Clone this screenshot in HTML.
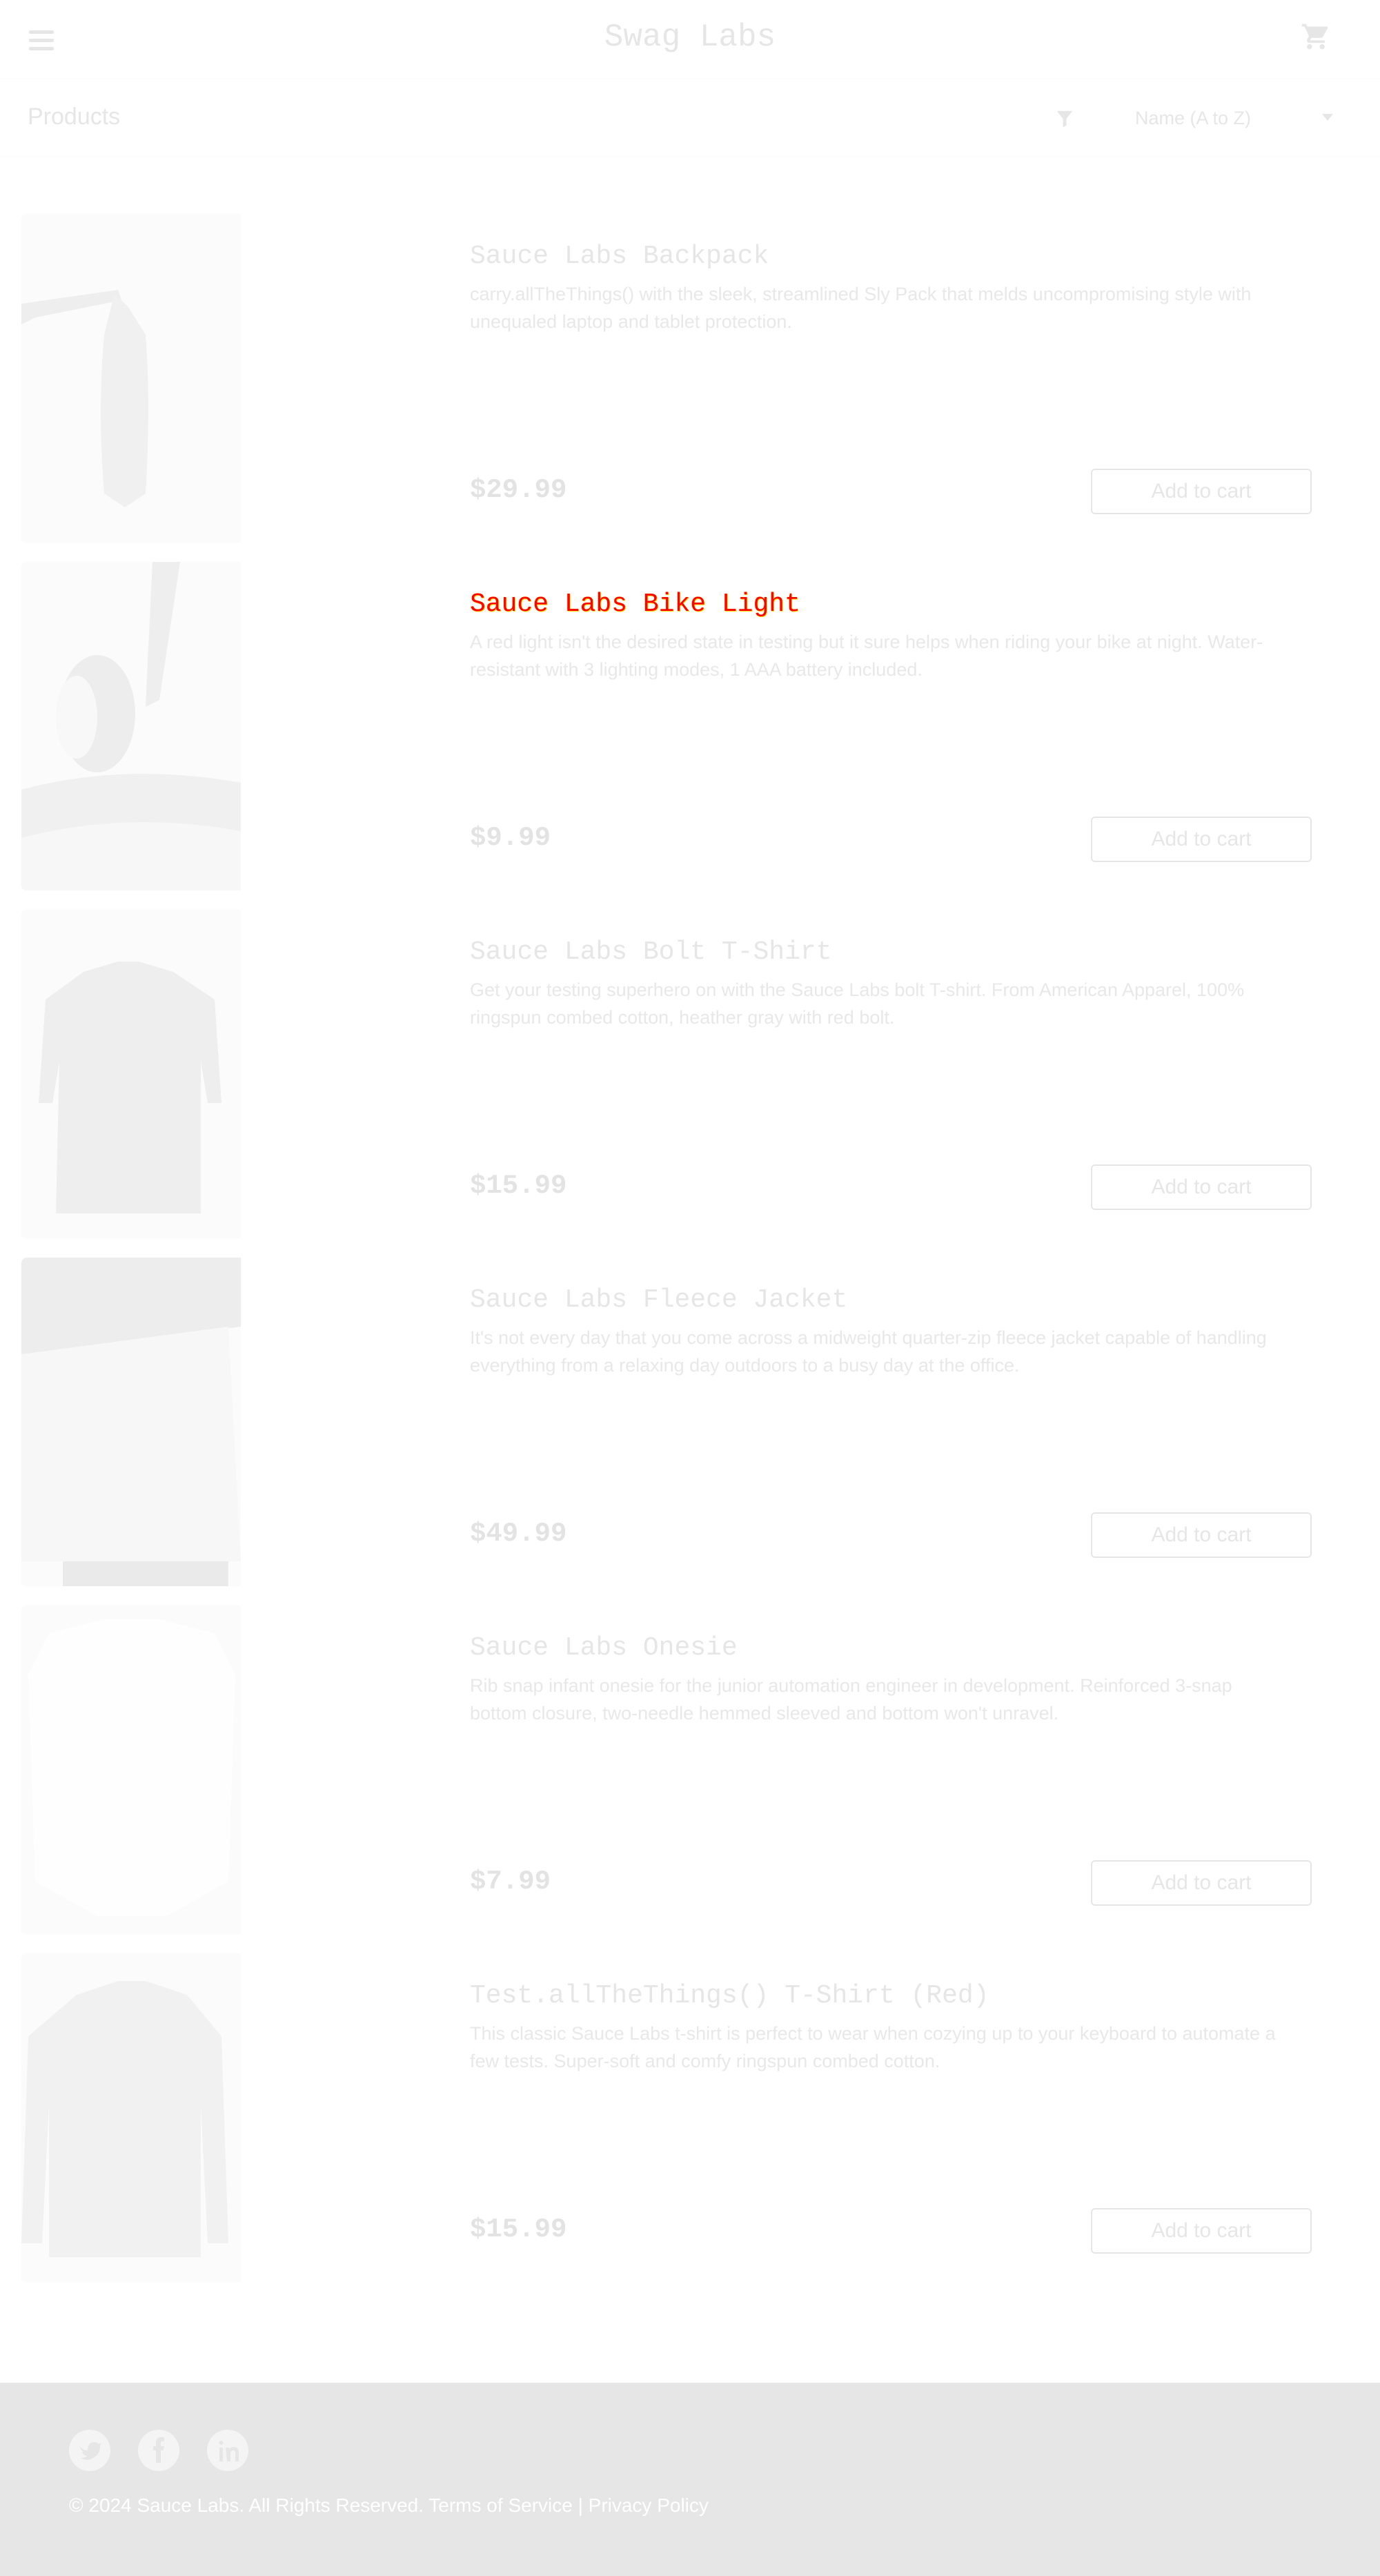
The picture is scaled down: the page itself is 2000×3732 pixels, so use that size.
<!DOCTYPE html>
<html><head><meta charset="utf-8"><style>
*{margin:0;padding:0;box-sizing:border-box}
body{width:2000px;height:3732px;background:#fff;font-family:"Liberation Sans",sans-serif;position:relative;overflow:hidden;color:#e3e3e3}
.abs{position:absolute}
.hline{position:absolute;left:0;width:2000px;height:2px;background:#fcfcfc}
.title{font-family:"Liberation Mono",monospace;font-size:42px;color:#e6e6e6;white-space:nowrap}
.card{position:absolute;left:31px;width:1937px;height:476px;border-radius:8px;background:#fff;box-shadow:0 0 2px #fafafa}
.img{position:absolute;left:0;top:0;width:318px;height:476px;background:#fbfbfb;border-radius:8px 0 0 8px;overflow:hidden}
.name{position:absolute;left:650px;top:40px;font-family:"Liberation Mono",monospace;font-size:38px;color:#e6e6e6;white-space:nowrap}
.desc{position:absolute;left:650px;top:96px;width:1190px;font-size:27px;line-height:40px;color:#e8e8e8}
.price{position:absolute;left:650px;top:378px;font-family:"Liberation Mono",monospace;font-size:39px;font-weight:bold;color:#e3e3e3}
.btn{position:absolute;left:1550px;top:369px;width:320px;height:66px;border:2px solid #e6e6e6;border-radius:6px;font-size:30px;color:#e6e6e6;text-align:center;line-height:62px}
.red{color:#ff0000;text-shadow:0 0 1px #ffe000,1px 1px 0 #ffdd00}
</style></head><body>
<div class="abs" style="left:42px;top:44px;width:36px;height:5px;background:#e6e6e6;border-radius:2px"></div>
<div class="abs" style="left:42px;top:56px;width:36px;height:5px;background:#e6e6e6;border-radius:2px"></div>
<div class="abs" style="left:42px;top:68px;width:36px;height:5px;background:#e6e6e6;border-radius:2px"></div>
<div class="abs title" style="left:0;width:2000px;text-align:center;top:28px;font-size:46px">Swag Labs</div>
<svg class="abs" style="left:1885px;top:30px" width="44" height="46" viewBox="0 0 24 24"><path fill="#e6e6e6" d="M7 18c-1.1 0-2 .9-2 2s.9 2 2 2 2-.9 2-2-.9-2-2-2zM1 2v2h2l3.6 7.6-1.35 2.4C4.5 15.4 5.5 17 7 17h12v-2H7.4l1.1-2h7.450c.75 0 1.4-.4 1.75-1l3.6-6.5A1 1 0 0 0 20.4 4H5.2l-.9-2H1zm16 16c-1.1 0-2 .9-2 2s.9 2 2 2 2-.9 2-2-.9-2-2-2z"/></svg>
<div class="hline" style="top:113px"></div>
<div class="abs" style="left:40px;top:150px;font-size:34px;color:#e6e6e6">Products</div>
<svg class="abs" style="left:1528px;top:157px" width="30" height="30" viewBox="0 0 24 24"><path fill="#e6e6e6" d="M3 3h18l-7 9v8l-4 2V12z"/></svg>
<div class="abs" style="left:1645px;top:156px;font-size:27px;color:#e6e6e6">Name (A to Z)</div>
<svg class="abs" style="left:1914px;top:163px" width="20" height="14" viewBox="0 0 20 14"><path fill="#e6e6e6" d="M2 2h16l-8 10z"/></svg>
<div class="hline" style="top:226px"></div>

<div class="card" style="top:310px"><div class="img"><svg width="318" height="476"><path d="M0 130 L140 110 L145 125 L20 150 L0 160Z" fill="#eeeeee"/><path d="M135 115 l20 20 l25 40 q8 100 0 230 l-30 20 l-30 -20 q-10 -120 0 -230z" fill="#f0f0f0"/></svg></div>
<div class="name">Sauce Labs Backpack</div>
<div class="desc">carry.allTheThings() with the sleek, streamlined Sly Pack that melds uncompromising style with unequaled laptop and tablet protection.</div>
<div class="price">$29.99</div><div class="btn">Add to cart</div></div>

<div class="card" style="top:814px"><div class="img"><svg width="318" height="476"><path d="M190 0 l40 0 l-30 200 l-20 10z" fill="#eeeeee"/><ellipse cx="110" cy="220" rx="55" ry="85" fill="#ededed"/><ellipse cx="80" cy="225" rx="30" ry="60" fill="#f8f8f8"/><path d="M0 330 Q150 290 318 320 L318 476 L0 476Z" fill="#f0f0f0"/><path d="M0 400 Q150 360 318 390 L318 476 L0 476Z" fill="#f7f7f7"/></svg></div>
<div class="name red">Sauce Labs Bike Light</div>
<div class="desc">A red light isn't the desired state in testing but it sure helps when riding your bike at night. Water-resistant with 3 lighting modes, 1 AAA battery included.</div>
<div class="price">$9.99</div><div class="btn">Add to cart</div></div>

<div class="card" style="top:1318px"><div class="img"><svg width="318" height="476"><path d="M90 90 l50 -15 l30 0 l50 15 l60 40 l10 150 l-20 0 l-10 -60 l0 220 l-210 0 l5 -220 l-10 60 l-20 0 l10 -150z" fill="#eeeeee"/></svg></div>
<div class="name">Sauce Labs Bolt T-Shirt</div>
<div class="desc">Get your testing superhero on with the Sauce Labs bolt T-shirt. From American Apparel, 100% ringspun combed cotton, heather gray with red bolt.</div>
<div class="price">$15.99</div><div class="btn">Add to cart</div></div>

<div class="card" style="top:1822px"><div class="img"><svg width="318" height="476"><path d="M0 0 L318 0 L318 100 L0 140Z" fill="#ededed"/><path d="M0 140 L300 100 L318 440 L0 440Z" fill="#f7f7f7"/><path d="M60 440 L300 440 L300 476 L60 476Z" fill="#eaeaea"/></svg></div>
<div class="name">Sauce Labs Fleece Jacket</div>
<div class="desc">It's not every day that you come across a midweight quarter-zip fleece jacket capable of handling everything from a relaxing day outdoors to a busy day at the office.</div>
<div class="price">$49.99</div><div class="btn">Add to cart</div></div>

<div class="card" style="top:2326px"><div class="img"><svg width="318" height="476"><path d="M40 40 l80 -20 l80 0 l80 20 l30 60 l-10 300 l-90 50 l-100 0 l-90 -50 l-10 -300z" fill="#fefefe"/></svg></div>
<div class="name">Sauce Labs Onesie</div>
<div class="desc">Rib snap infant onesie for the junior automation engineer in development. Reinforced 3-snap bottom closure, two-needle hemmed sleeved and bottom won't unravel.</div>
<div class="price">$7.99</div><div class="btn">Add to cart</div></div>

<div class="card" style="top:2830px"><div class="img"><svg width="318" height="476"><path d="M80 60 l60 -20 l40 0 l60 20 l50 60 l10 300 l-30 0 l-10 -200 l0 220 l-220 0 l0 -220 l-10 200 l-30 0 l10 -300z" fill="#f1f1f1"/></svg></div>
<div class="name">Test.allTheThings() T-Shirt (Red)</div>
<div class="desc">This classic Sauce Labs t-shirt is perfect to wear when cozying up to your keyboard to automate a few tests. Super-soft and comfy ringspun combed cotton.</div>
<div class="price">$15.99</div><div class="btn">Add to cart</div></div>

<div class="abs" style="left:0;top:3452px;width:2000px;height:280px;background:#e6e6e6"></div>
<svg class="abs" style="left:100px;top:3520px" width="260" height="60">
<circle cx="30" cy="30" r="30" fill="#f4f4f4"/><circle cx="130" cy="30" r="30" fill="#f4f4f4"/><circle cx="230" cy="30" r="30" fill="#f4f4f4"/>
<path d="M15 24 q5 6 12 6 q0 -12 10 -12 q4 0 6 3 l4 -2 l-2 4 q1 14 -14 20 q-7 2 -14 -2 q6 0 10 -3 q-6 0 -8 -6 q2 0 3 0 q-6 -2 -6 -8z" fill="#e6e6e6"/>
<path d="M126 48 V30 h-4 v-6 h4 v-5 q0 -8 8 -8 h4 v6 h-3 q-2 0 -2 2 v5 h5 l-1 6 h-4 v18z" fill="#e6e6e6"/>
<path d="M218 26 h5 v20 h-5z M220.5 16 a3 3 0 1 1 0 6 a3 3 0 1 1 0 -6z M227 26 h5 v3 q2 -4 7 -4 q7 0 7 8 v13 h-5 v-12 q0 -4 -3 -4 q-4 0 -4 4 v12 h-5z" fill="#e6e6e6"/>
</svg>
<div class="abs" style="left:100px;top:3614px;font-size:28px;color:#fff;white-space:nowrap">© 2024 Sauce Labs. All Rights Reserved. Terms of Service | Privacy Policy</div>
</body></html>
